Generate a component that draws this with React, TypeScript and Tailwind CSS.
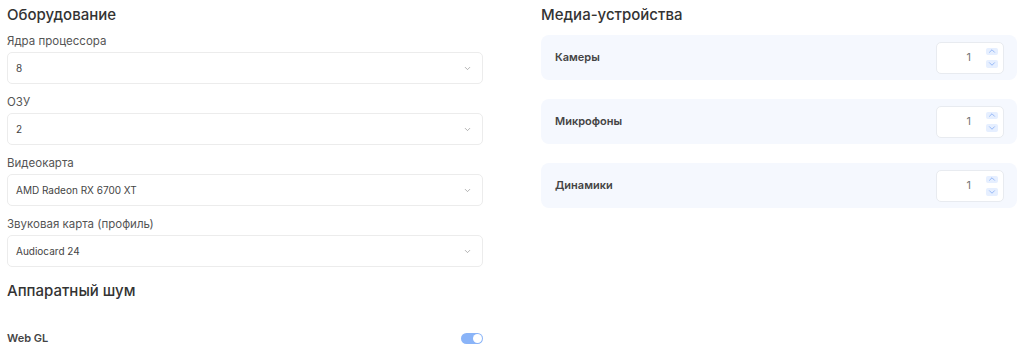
import { ChevronDown, ChevronUp } from "lucide-react";

const fields = [
  { label: "Ядра процессора", value: "8" },
  { label: "ОЗУ", value: "2" },
  { label: "Видеокарта", value: "AMD Radeon RX 6700 XT" },
  { label: "Звуковая карта (профиль)", value: "Audiocard 24" },
];

const media = ["Камеры", "Микрофоны", "Динамики"];

function SelectField({ label, value }: { label: string; value: string }) {
  return (
    <div className="flex flex-col">
      <span className="text-[11.5px] leading-[14px] text-[#555]">{label}</span>
      <div className="mt-[4px] h-[32px] flex items-center justify-between rounded-[5px] border border-[#ececec] bg-white pl-[8px] pr-[10px]">
        <span className="text-[10px] text-[#444]">{value}</span>
        <ChevronDown className="h-[9px] w-[9px] text-[#999]" strokeWidth={2} />
      </div>
    </div>
  );
}

function MediaRow({ label }: { label: string }) {
  return (
    <div className="h-[45px] flex items-center justify-between rounded-[8px] bg-[#f5f8fe] pl-[14px] pr-[13px]">
      <span className="text-[11px] font-semibold text-[#444]">{label}</span>
      <div className="h-[32px] w-[68px] flex items-center justify-end rounded-[5px] border border-[#e8ebf0] bg-white pr-[5px]">
        <span className="text-[11px] text-[#777] mr-[15px]">1</span>
        <div className="flex flex-col gap-[5px]">
          <div className="h-[7px] w-[12px] flex items-center justify-center rounded-[2px] bg-[#e6efff]">
            <ChevronUp className="h-[10px] w-[10px] text-[#8fb3f5]" strokeWidth={2.2} />
          </div>
          <div className="h-[8px] w-[12px] flex items-center justify-center rounded-[2px] bg-[#e6efff]">
            <ChevronDown className="h-[10px] w-[10px] text-[#8fb3f5]" strokeWidth={2.2} />
          </div>
        </div>
      </div>
    </div>
  );
}

export default function App() {
  return (
    <div
      className="w-[1024px] h-[356px] bg-white flex gap-[58px] px-[7px] overflow-hidden"
      style={{ fontFamily: "Inter, 'Noto Sans', sans-serif" }}
    >
      <div className="w-[476px] flex flex-col">
        <h2 className="mt-[5px] text-[15px] leading-[20px] font-medium text-[#333]">Оборудование</h2>
        <div className="mt-[9px] flex flex-col gap-[11px]">
          {fields.map((f) => (
            <SelectField key={f.label} label={f.label} value={f.value} />
          ))}
        </div>
        <h2 className="mt-[14px] text-[15px] leading-[20px] font-medium text-[#333]">Аппаратный шум</h2>
        <div className="mt-[29px] flex items-center justify-between">
          <span className="text-[11px] font-semibold text-[#444]">Web GL</span>
          <div className="h-[11px] w-[22px] flex items-center justify-end rounded-full bg-[#8ab4f8] pr-[1px]">
            <div className="h-[9px] w-[9px] rounded-full bg-white" />
          </div>
        </div>
      </div>
      <div className="w-[476px] flex flex-col">
        <h2 className="mt-[5px] text-[15px] leading-[20px] font-medium text-[#333]">Медиа-устройства</h2>
        <div className="mt-[10px] flex flex-col gap-[19px]">
          {media.map((m) => (
            <MediaRow key={m} label={m} />
          ))}
        </div>
      </div>
    </div>
  );
}
